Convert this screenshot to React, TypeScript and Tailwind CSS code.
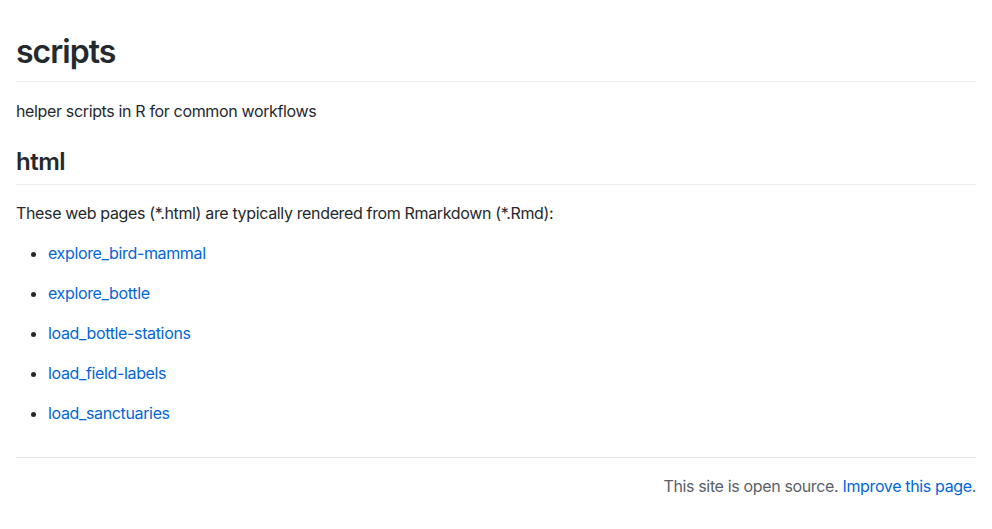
const links = [
  "explore_bird-mammal",
  "explore_bottle",
  "load_bottle-stations",
  "load_field-labels",
  "load_sanctuaries",
];

export default function App() {
  return (
    <div
      className="min-h-screen bg-white text-[#24292e] text-base leading-6 tracking-[-0.022em]"
      style={{ fontFamily: "Inter, 'Liberation Sans', sans-serif" }}
    >
      <div className="px-4 pt-8 pb-8">
        <h1 className="text-[32px] font-semibold leading-10 tracking-[-0.03em] pb-[9px] border-b border-[#eaecef] mb-4">
          scripts
        </h1>
        <p className="mb-4 pt-px">helper scripts in R for common workflows</p>

        <h2 className="text-2xl font-semibold leading-[30px] tracking-[-0.02em] mt-6 pb-[7px] border-b border-[#eaecef] mb-4">
          html
        </h2>
        <p className="mb-4">These web pages (*.html) are typically rendered from Rmarkdown (*.Rmd):</p>

        <ul className="list-disc pl-8 mb-4">
          {links.map((l) => (
            <li key={l} className="mt-4 first:mt-0">
              <a href="#" className="text-[#0366d6]">
                {l}
              </a>
            </li>
          ))}
        </ul>

        <div className="mt-8 border-t border-[#e1e4e8] pt-4 text-right text-[#586069]">
          This site is open source.{" "}
          <a href="#" className="text-[#0366d6]">
            Improve this page
          </a>
          .
        </div>
      </div>
    </div>
  );
}
